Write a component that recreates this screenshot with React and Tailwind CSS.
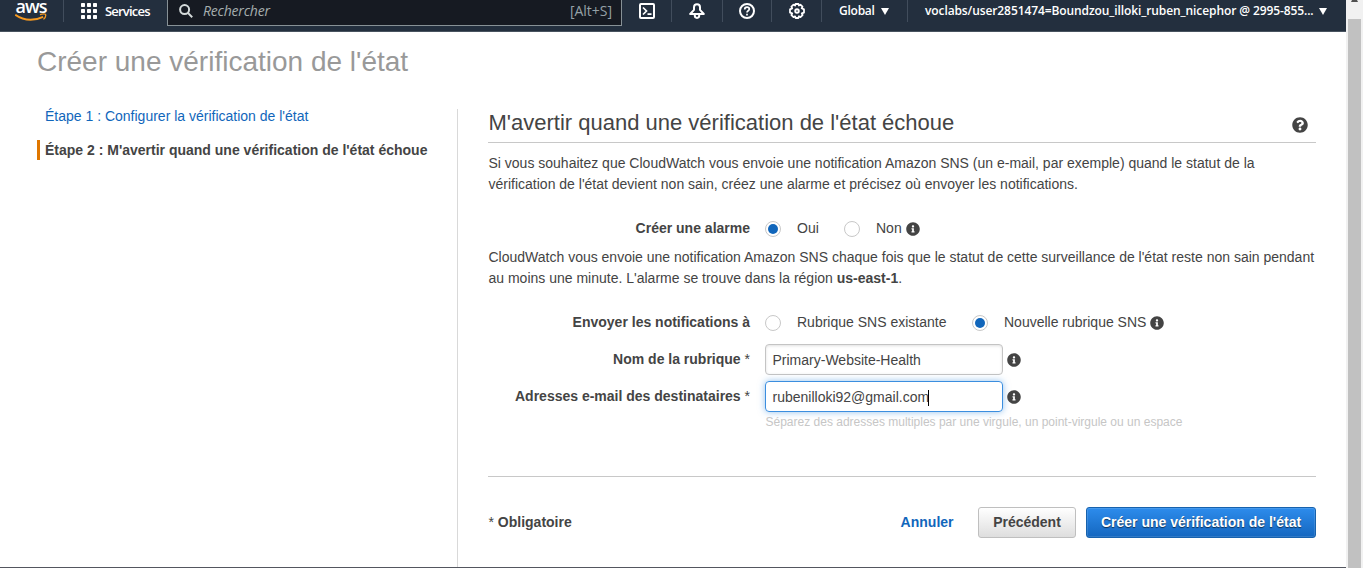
import React from "react";
import { FaInfoCircle, FaQuestionCircle } from "react-icons/fa";

function Logo() {
  return (
    <div className="flex h-[31px] w-[32px] flex-col items-center">
      <span className="-mt-[4px] h-[17px] font-['Open_Sans',sans-serif] text-[18px] leading-[20px] font-semibold tracking-[-0.9px] text-white">aws</span>
      <svg width="32" height="9" viewBox="0 0 32 9" className="shrink-0" fill="none">
        <path d="M.3 1.700C5 5.100 10 6.700 15.500 6.700c4.600 0 8.800-1 12.600-2.900" stroke="#f79a20" strokeWidth="1.900" />
        <path d="M25 1.600c2-.8 4.600-.8 5.500-.3.400 1-.4 3.600-2 5.100" stroke="#f79a20" strokeWidth="1.300" />
      </svg>
    </div>
  );
}

function AppsIcon() {
  return (
    <svg width="16" height="16" viewBox="0 0 16 16" fill="#fff">
      {[0, 6, 12].map((y) => [0, 6, 12].map((x) => <rect key={x + "-" + y} x={x} y={y} width="4" height="4" rx=".7" />))}
    </svg>
  );
}

function SearchIcon() {
  return (
    <svg width="14" height="14" viewBox="0 0 14 14" fill="none" stroke="#d5dbdb" strokeWidth="2">
      <circle cx="5.600" cy="5.600" r="4.500" />
      <path d="M8.900 8.900 13.200 13.200" />
    </svg>
  );
}

const iconProps = { width: 16, height: 16, viewBox: "0 0 16 16", fill: "none", stroke: "#fff", strokeWidth: 2, strokeLinejoin: "round" };

function ShellIcon() {
  return (
    <svg {...iconProps}>
      <rect x="1" y="1" width="14" height="14" rx="1" />
      <path d="M4 4.500 7.500 8 4 11.500M8.500 11.200h4" strokeWidth="1.700" strokeLinejoin="miter" />
    </svg>
  );
}

function BellIcon() {
  return (
    <svg {...iconProps}>
      <path d="M8 1.200C6 1.200 5 2.600 5 4.200v2.600L1.200 11h13.600L11 6.800V4.200C11 2.600 10 1.200 8 1.200Z" />
      <path d="M5.800 11.500v1.100c0 1.300.9 2.300 2.200 2.300s2.200-1 2.200-2.300v-1.100" />
    </svg>
  );
}

function HelpIcon() {
  return (
    <svg {...iconProps}>
      <circle cx="8" cy="8" r="7" />
      <path d="M5.700 6.500C5.700 5 6.700 4.100 8 4.100s2.300.8 2.300 2C10.300 7.800 8 7.700 8 9.500M8 10.800v1.700" strokeWidth="1.700" />
    </svg>
  );
}

function GearIcon() {
  return (
    <svg {...iconProps}>
      <path d="M6.500 1h3l.4 1.500 1.500-.8 2.100 1.900-.8 1.700L15 6.400v3.200l-2.200.8.8 1.800-2.100 1.900-1.600-.8L9.400 15H6.600l-.5-1.700-1.600.8-2.100-1.900.8-1.800L1 9.600V6.400l2.200-1-.8-1.800 2.100-1.900 1.600.8Z" strokeWidth="1.800" />
      <circle cx="8" cy="8" r="1.800" strokeWidth="1.900" />
    </svg>
  );
}

function Caret() {
  return (
    <svg width="8" height="7" viewBox="0 0 8 7" fill="#fff">
      <path d="M0 0h8L4 7Z" />
    </svg>
  );
}

function Header() {
  return (
    <header className="flex h-8 shrink-0 border-b border-[#48535f] bg-[#232f3e] font-['Open_Sans','Noto_Sans',sans-serif] text-white">
      <div className="flex w-[63px] shrink-0 justify-start pl-[15px]"><Logo /></div>
      <div className="flex h-[22px] w-[104px] shrink-0 items-center border-l border-[#414d5c] pl-[17px]">
        <AppsIcon />
        <span className="ml-[8px] text-[13px] leading-4 font-semibold tracking-[-0.8px]">Services</span>
      </div>
      <div className="flex h-[26px] w-[455px] shrink-0 items-center border-x border-b border-[#879196] bg-[#161a22] pr-[9px] pb-[3px] pl-[11px]">
        <SearchIcon />
        <span className="ml-[10px] text-[14px] leading-4 tracking-[-0.2px] text-[#a5aeae] italic">Rechercher</span>
        <span className="ml-auto text-[14px] leading-4 tracking-[-0.02px] text-[#95a0a6]">[Alt+S]</span>
      </div>
      <div className="flex h-[22px] w-[49px] items-center justify-center pl-px"><ShellIcon /></div>
      <div className="flex h-[22px] w-[51px] items-center justify-center border-l border-[#414d5c]"><BellIcon /></div>
      <div className="flex h-[22px] w-[49px] items-center justify-center border-l border-[#414d5c]"><HelpIcon /></div>
      <div className="flex h-[22px] w-[50px] items-center justify-center border-l border-[#414d5c]"><GearIcon /></div>
      <div className="flex h-[22px] w-[86px] items-center border-l border-[#414d5c] pl-[17px]">
        <span className="w-[42px] text-[12px] leading-4 font-semibold tracking-[-0.25px]">Global</span>
        <Caret />
      </div>
      <div className="flex h-[22px] flex-1 items-center border-l border-[#414d5c] pl-[17px]">
        <span className="w-[394px] text-[12px] leading-4 font-semibold tracking-[-0.1px] whitespace-nowrap">voclabs/user2851474=Boundzou_illoki_ruben_nicephor @ 2995-855...</span>
        <Caret />
      </div>
    </header>
  );
}

function Radio({ checked }) {
  return (
    <span className="flex size-4 shrink-0 items-center justify-center rounded-full border border-[#c8c8c8] bg-white">
      {checked && <span className="size-[10px] rounded-full bg-[#1166bb]" />}
    </span>
  );
}

function Info() {
  return <FaInfoCircle size={14} color="#444" className="shrink-0" />;
}

function Label({ children, required }) {
  return (
    <div className="w-[262px] shrink-0 text-right">
      <span className="font-bold">{children}</span>
      {required && " *"}
    </div>
  );
}

function Sidebar() {
  return (
    <nav className="w-[457px] shrink-0 pl-[37px] text-[14px]">
      <div className="mt-[-3px] flex h-5 items-center border-l-[3px] border-transparent pl-[5px] whitespace-nowrap text-[#1166bb]">Étape 1 : Configurer la vérification de l'état</div>
      <div className="mt-[14px] flex h-5 items-center border-l-[3px] border-[#e07700] pl-[5px] font-bold whitespace-nowrap">Étape 2 : M'avertir quand une vérification de l'état échoue</div>
    </nav>
  );
}

function Form() {
  return (
    <main className="flex w-[859px] flex-col border-l border-[#d9d9d9] pl-[30px] text-[14px] leading-[21px]">
      <div className="flex h-[34px] shrink-0 items-start justify-between border-b border-[#c8c8c8] pt-px pr-[8px]">
        <h2 className="pl-[0.5px] text-[22px] leading-[26px]">M'avertir quand une vérification de l'état échoue</h2>
        <FaQuestionCircle size={16} color="#444" className="mt-[7px]" />
      </div>
      <p className="mt-[10px] pl-[0.5px] whitespace-nowrap">
        Si vous souhaitez que CloudWatch vous envoie une notification Amazon SNS (un e-mail, par exemple) quand le statut de la<br />
        vérification de l'état devient non sain, créez une alarme et précisez où envoyer les notifications.
      </p>
      <div className="mt-[23px] flex h-[21px] items-center">
        <Label>Créer une alarme</Label>
        <div className="mt-px ml-[15px]"><Radio checked /></div>
        <span className="ml-[16px] w-[47px]">Oui</span>
        <div className="mt-px"><Radio /></div>
        <span className="mr-[4px] ml-[16px]">Non</span>
        <div className="mt-px"><Info /></div>
      </div>
      <p className="mt-[8px] pl-[0.5px] whitespace-nowrap">
        CloudWatch vous envoie une notification Amazon SNS chaque fois que le statut de cette surveillance de l'état reste non sain pendant<br />
        au moins une minute. L'alarme se trouve dans la région <b>us-east-1</b>.
      </p>
      <div className="mt-[23px] flex h-[21px] items-center">
        <Label>Envoyer les notifications à</Label>
        <div className="mt-px ml-[15px]"><Radio /></div>
        <span className="ml-[16px] w-[175px]">Rubrique SNS existante</span>
        <div className="mt-px"><Radio checked /></div>
        <span className="mr-[4px] ml-[16px]">Nouvelle rubrique SNS</span>
        <div className="mt-px"><Info /></div>
      </div>
      <div className="mt-[11px] flex h-[31px] items-center">
        <Label required>Nom de la rubrique</Label>
        <div className="mr-[4px] ml-[15px] flex h-[31px] w-[238px] items-center rounded-[4px] border border-[#c4c4c4] pt-[2px] pl-[6.500px] shadow-[inset_0_1px_3px_rgba(0,0,0,0.12)]">Primary-Website-Health</div>
        <div className="mt-px"><Info /></div>
      </div>
      <div className="mt-[6px] flex h-[31px] items-center">
        <Label required>Adresses e-mail des destinataires</Label>
        <div className="mr-[4px] ml-[15px] flex h-[31px] w-[238px] items-center rounded-[4px] border border-[#3b8edf] pt-[2px] pl-[6.500px] shadow-[0_0_7px_rgba(59,142,223,0.55)]">
          rubenilloki92@gmail.com<span className="-ml-px h-[16px] w-px bg-black" />
        </div>
        <div className="mt-px"><Info /></div>
      </div>
      <p className="ml-[277.500px] text-[12px] leading-[20px] text-[#c6c6c6]">Séparez des adresses multiples par une virgule, un point-virgule ou un espace</p>
      <div className="mt-[44px] flex h-[62px] items-end border-t border-[#c8c8c8]">
        <div className="mb-[5px] pl-[0.5px]">* <b>Obligatoire</b></div>
        <a className="mr-[24.500px] mb-[5px] ml-auto font-bold text-[#1166bb]">Annuler</a>
        <button className="mr-[10px] h-[31px] w-[98px] rounded-[3px] border border-[#bfbfbf] bg-linear-to-b from-white to-[#dedede] font-bold">Précédent</button>
        <button className="h-[31px] w-[230px] rounded-[3px] border border-[#1762ad] bg-linear-to-b from-[#2d8cec] to-[#1467c0] font-bold text-white shadow-[inset_0_0_0_1px_rgba(255,255,255,0.12)] [text-shadow:0_1px_1px_rgba(0,0,0,0.6)]">Créer une vérification de l'état</button>
      </div>
    </main>
  );
}

export default function App() {
  return (
    <div className="flex h-[568px] w-[1363px] overflow-hidden bg-white font-['Liberation_Sans',Arial,sans-serif] text-[#444]">
      <div className="flex w-[1346px] shrink-0 flex-col border-b border-[#53565f]">
        <Header />
        <h1 className="mt-[13px] ml-[37px] h-[64px] text-[28px] leading-[34px] text-[#999]">Créer une vérification de l'état</h1>
        <div className="flex flex-1">
          <Sidebar />
          <Form />
        </div>
      </div>
      <div className="flex w-[17px] flex-col items-center bg-[#f1f1f1]">
        <svg width="7" height="2" viewBox="0 0 7 2"><path d="M1 0h5l1 2H0Z" fill="#505050" /></svg>
        <div className="mt-[17px] mr-[1px] w-[13px] flex-1 bg-[#c1c1c1]" />
      </div>
    </div>
  );
}
